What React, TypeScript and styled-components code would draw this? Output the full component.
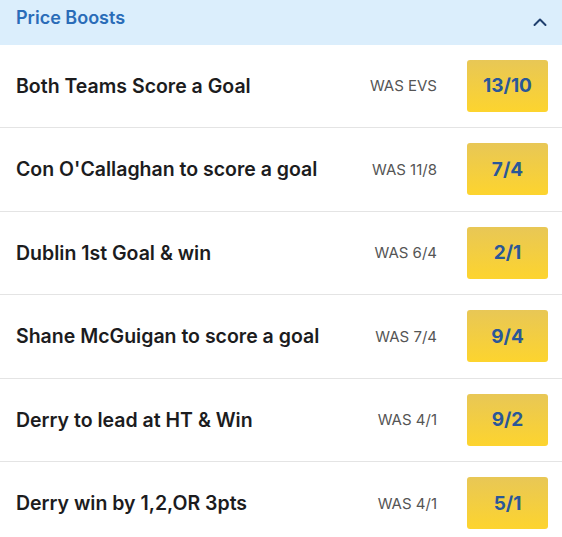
import styled, { createGlobalStyle } from 'styled-components'

const GlobalStyle = createGlobalStyle`
    body {
        margin: 0;
        background: #ffffff;
        font-family: Inter, "Noto Sans", sans-serif;
    }
`

const Panel = styled.section`
    width: 562px;
    background: #ffffff;
`

const Header = styled.header`
    display: flex;
    align-items: center;
    justify-content: space-between;
    height: 44.5px;
    padding: 0 14px 0 16px;
    background: #dbeefc;
    box-sizing: border-box;
`

const Title = styled.h2`
    margin: 0 0 9px;
    font-size: 18px;
    font-weight: 600;
    color: #2a6cb8;
`

const Row = styled.div`
    display: flex;
    align-items: center;
    height: 83.5px;
    padding: 0 14px 0 16px;
    box-sizing: border-box;
    border-bottom: 1px solid #e4e4e4;
`

const Selection = styled.span`
    flex: 1;
    font-size: 19.5px;
    font-weight: 600;
    color: #1c1c1e;
`

const Was = styled.span`
    margin-right: 30px;
    font-size: 15px;
    color: #555555;
`

const PriceButton = styled.button`
    width: 81px;
    height: 52px;
    border: none;
    border-radius: 3px;
    background: linear-gradient(180deg, #e8c756 0%, #fdd42e 100%);
    font-family: inherit;
    font-size: 19px;
    font-weight: 700;
    color: #2a5798;
    cursor: pointer;
`

const boosts = [
    { name: 'Both Teams Score a Goal', was: 'EVS', price: '13/10' },
    { name: "Con O'Callaghan to score a goal", was: '11/8', price: '7/4' },
    { name: 'Dublin 1st Goal & win', was: '6/4', price: '2/1' },
    { name: 'Shane McGuigan to score a goal', was: '7/4', price: '9/4' },
    { name: 'Derry to lead at HT & Win', was: '4/1', price: '9/2' },
    { name: 'Derry win by 1,2,OR 3pts', was: '4/1', price: '5/1' },
]

function ChevronUp() {
    return (
        <svg width="16" height="16" viewBox="0 0 16 16" fill="none">
            <path d="M2.5 11 L8 5.5 L13.5 11" stroke="#1f3f6e" strokeWidth="2" strokeLinecap="round" strokeLinejoin="round" />
        </svg>
    )
}

export default function App() {
    return (
        <>
            <GlobalStyle />
            <Panel>
                <Header>
                    <Title>Price Boosts</Title>
                    <ChevronUp />
                </Header>
                {boosts.map((b) => (
                    <Row key={b.name}>
                        <Selection>{b.name}</Selection>
                        <Was>WAS {b.was}</Was>
                        <PriceButton>{b.price}</PriceButton>
                    </Row>
                ))}
            </Panel>
        </>
    )
}
